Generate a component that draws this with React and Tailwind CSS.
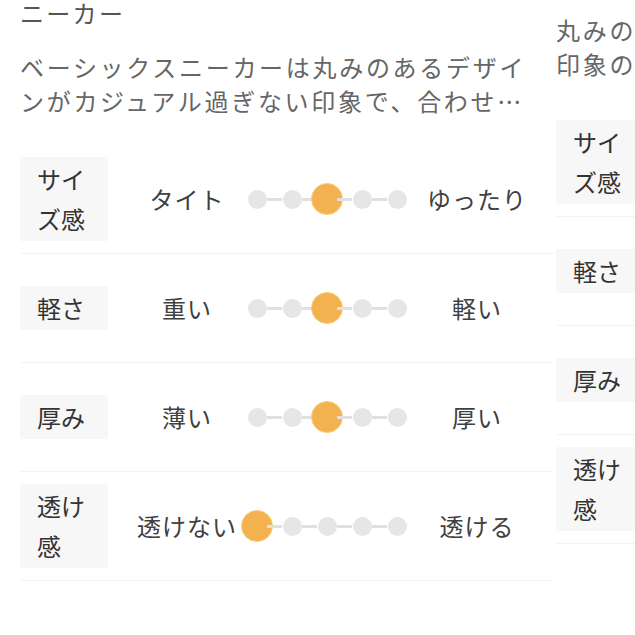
import React from "react";

const font = { fontFamily: '"Noto Sans CJK JP", "Noto Sans", sans-serif' };

function Slider({ value }) {
  const items = [];
  for (let i = 1; i <= 5; i++) {
    items.push(
      <div key={"d" + i} className="flex w-[20px] h-[20px] shrink-0 items-center justify-center">
        {i === value ? (
          <div className="w-[32px] h-[32px] shrink-0 rounded-full bg-[#f3b24f] border border-[#f8cf7c]" />
        ) : (
          <div className="w-[19px] h-[19px] shrink-0 rounded-full bg-[#e6e6e6]" />
        )}
      </div>
    );
    if (i < 5) {
      items.push(<div key={"l" + i} className="flex-1 h-[3px] bg-[#e0e0e0]" />);
    }
  }
  return <div className="flex w-[160px] shrink-0 items-center">{items}</div>;
}

function Row({ label, left, right, value }) {
  return (
    <div className="flex h-[109px] items-center border-b border-[#f3f3f3]">
      <div className="w-[88px] shrink-0 bg-[#f7f7f7] px-[17px] py-[2px] text-[24px] leading-[40px] text-[#333]">
        {label}
      </div>
      <div className="ml-[19px] w-[120px] shrink-0 text-center text-[24px] tracking-[1px] text-[#404040] whitespace-nowrap">
        {left}
      </div>
      <Slider value={value} />
      <div className="ml-[10px] w-[120px] shrink-0 text-center text-[24px] tracking-[1px] text-[#404040] whitespace-nowrap">
        {right}
      </div>
    </div>
  );
}

const rows = [
  { label: "サイズ感", left: "タイト", right: "ゆったり", value: 3 },
  { label: "軽さ", left: "重い", right: "軽い", value: 3 },
  { label: "厚み", left: "薄い", right: "厚い", value: 3 },
  { label: "透け感", left: "透けない", right: "透ける", value: 1 },
];

function Card({ title, desc }) {
  return (
    <div className="w-[533px] shrink-0">
      <div className="text-[24px] leading-[37px] tracking-[2.3px] text-[#555] w-[520px]">{title}</div>
      <div className="mt-[19px] w-[520px] text-[24px] leading-[34px] tracking-[2.7px] text-[#666] line-clamp-2">
        {desc}
      </div>
      <div className="mt-[27px]">
        {rows.map((r) => (
          <Row key={r.label} {...r} />
        ))}
      </div>
    </div>
  );
}

export default function App() {
  return (
    <div className="w-[635px] h-[635px] overflow-hidden bg-white" style={font}>
      <div className="-mt-[43px] flex gap-[3px] pl-[20px]">
        <Card
          title={
            <>
              定番ベーシックス
              <br />
              ニーカー
            </>
          }
          desc="ベーシックスニーカーは丸みのあるデザインがカジュアル過ぎない印象で、合わせやすいです。"
        />
        <Card
          title="ラウンドトゥスニーカー"
          desc={
            <>
              丸みのあるフォルムでころんとした優しい
              <br />
              印象のスニーカーで、コーデに合わせやすい一足です。
            </>
          }
        />
      </div>
    </div>
  );
}
